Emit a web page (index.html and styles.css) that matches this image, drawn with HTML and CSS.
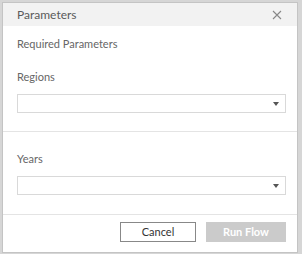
FILE: index.html
```html
<!DOCTYPE html>
<html>
<head>
<meta charset="utf-8">
<link rel="stylesheet" href="styles.css">
</head>
<body>
<div class="dialog">
  <div class="header">
    <span class="title">Parameters</span>
    <svg class="close" width="10" height="10" viewBox="0 0 10 10"><path d="M1 1L9 9M9 1L1 9" stroke="#888" stroke-width="1.1" fill="none"/></svg>
  </div>
  <div class="section first">
    <div class="subtitle">Required Parameters</div>
    <div class="label">Regions</div>
    <div class="select"><span class="arrow"></span></div>
  </div>
  <div class="section">
    <div class="label">Years</div>
    <div class="select"><span class="arrow"></span></div>
  </div>
  <div class="footer">
    <button class="btn cancel">Cancel</button>
    <button class="btn run">Run Flow</button>
  </div>
</div>
</body>
</html>
```
FILE: styles.css
```css
html, body { margin: 0; padding: 0; }
body {
  width: 302px; height: 254px;
  background: #d6d6d6;
  padding: 2px 0 0 2px;
  box-sizing: border-box;
  font-family: Lato, "Noto Sans", sans-serif;
}
.dialog {
  width: 296px; height: 251px;
  box-sizing: border-box;
  background: #fff;
  border: 1px solid #c4c4c4;
  display: flex; flex-direction: column;
}
.header {
  height: 23px;
  background: #f2f2f2;
  display: flex; align-items: center; justify-content: space-between;
  padding: 0 15px 0 14px;
}
.title { font-size: 12px; color: #5a5a5a; }
.close { display: block; }
.section {
  padding: 0 11px 0 14px;
  border-bottom: 1px solid #e4e4e4;
}
.section.first { height: 105px; }
.section + .section { height: 82px; }
.subtitle { font-size: 11px; color: #666; margin-top: 11px; line-height: 14px; }
.label { font-size: 11px; color: #666; line-height: 14px; margin-top: 19px; }
.section + .section .label { margin-top: 20px; }
.select {
  margin-top: 10px;
  height: 19px;
  box-sizing: border-box;
  border: 1px solid #d9d9d9;
  position: relative;
}
.arrow {
  position: absolute; right: 6px; top: 7px;
  width: 0; height: 0;
  border-left: 3.5px solid transparent; border-right: 3.5px solid transparent;
  border-top: 4px solid #555;
}
.footer {
  flex: 1;
  display: flex; justify-content: flex-end; align-items: center;
  gap: 10px;
  padding: 0 11px 4px 0;
}
.btn {
  width: 76px; height: 20px;
  box-sizing: border-box;
  font-family: Lato, "Noto Sans", sans-serif;
  font-size: 11px;
  padding: 0;
}
.cancel { background: #fff; border: 1px solid #888; color: #333; }
.run { background: #cbcbcb; border: 1px solid #cbcbcb; color: #fff; font-weight: bold; width: 80px; }
```
